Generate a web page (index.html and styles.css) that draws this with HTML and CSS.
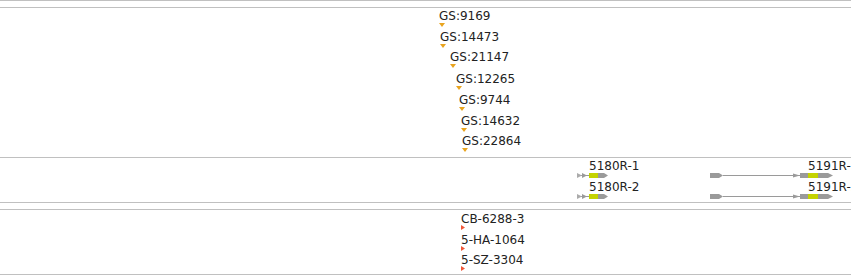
FILE: index.html
```html
<!DOCTYPE html>
<html lang="en">
<head>
  <meta charset="UTF-8">
  <title>Track view</title>
  <link rel="stylesheet" href="styles.css">
</head>
<body>

  <div class="browser">
    <div class="track-edge"></div>

    <div class="track-group">
      <!-- GS feature track -->
      <div class="track track-gs">
        <div class="feature" style="left:439px;top:1px">
          <div class="feature-label">GS:9169</div>
          <svg class="tick" width="6" height="4" viewBox="0 0 6 4"><polygon points="0,0 6,0 3,4"/></svg>
        </div>
        <div class="feature" style="left:440px;top:22px">
          <div class="feature-label">GS:14473</div>
          <svg class="tick" width="6" height="4" viewBox="0 0 6 4"><polygon points="0,0 6,0 3,4"/></svg>
        </div>
        <div class="feature" style="left:450px;top:42px">
          <div class="feature-label">GS:21147</div>
          <svg class="tick" width="6" height="4" viewBox="0 0 6 4"><polygon points="0,0 6,0 3,4"/></svg>
        </div>
        <div class="feature" style="left:456px;top:64px">
          <div class="feature-label">GS:12265</div>
          <svg class="tick" width="6" height="4" viewBox="0 0 6 4"><polygon points="0,0 6,0 3,4"/></svg>
        </div>
        <div class="feature" style="left:459px;top:85px">
          <div class="feature-label">GS:9744</div>
          <svg class="tick" width="6" height="4" viewBox="0 0 6 4"><polygon points="0,0 6,0 3,4"/></svg>
        </div>
        <div class="feature" style="left:461px;top:106px">
          <div class="feature-label">GS:14632</div>
          <svg class="tick" width="6" height="4" viewBox="0 0 6 4"><polygon points="0,0 6,0 3,4"/></svg>
        </div>
        <div class="feature" style="left:462px;top:126px">
          <div class="feature-label">GS:22864</div>
          <svg class="tick" width="6" height="4" viewBox="0 0 6 4"><polygon points="0,0 6,0 3,4"/></svg>
        </div>
      </div>

      <!-- gene models -->
      <div class="track track-genes">
        <div class="gene" style="left:577px;top:1px">
          <div class="feature-label" style="padding-left:12px">5180R-1</div>
          <svg class="gene-glyph" width="32" height="5" viewBox="0 0 32 5">
            <rect class="utr" x="0" y="2" width="12" height="1"/>
            <polygon class="utr light" points="0,0 5,2.5 0,5"/>
            <polygon class="utr" points="5,0 10,2.5 5,5"/>
            <rect class="cds" x="12" y="0" width="9" height="5"/>
            <polygon class="utr" points="21,0 27,0 31,2.5 27,5 21,5"/>
          </svg>
        </div>
        <div class="gene" style="left:577px;top:22px">
          <div class="feature-label" style="padding-left:12px">5180R-2</div>
          <svg class="gene-glyph" width="32" height="5" viewBox="0 0 32 5">
            <rect class="utr" x="0" y="2" width="12" height="1"/>
            <polygon class="utr light" points="0,0 5,2.5 0,5"/>
            <polygon class="utr" points="5,0 10,2.5 5,5"/>
            <rect class="cds" x="12" y="0" width="9" height="5"/>
            <polygon class="utr" points="21,0 27,0 31,2.5 27,5 21,5"/>
          </svg>
        </div>
        <div class="gene" style="left:710px;top:1px">
          <div class="feature-label" style="padding-left:98px">5191R-1</div>
          <svg class="gene-glyph" width="124" height="5" viewBox="0 0 124 5">
            <polygon class="utr" points="0,0 9,0 13,2.5 9,5 0,5"/>
            <rect class="utr" x="13" y="2" width="77" height="1"/>
            <polygon class="utr" points="83,0.5 90,2.5 83,4.5"/>
            <rect class="utr" x="90" y="0" width="8" height="5"/>
            <rect class="cds" x="98" y="0" width="10" height="5"/>
            <polygon class="utr" points="108,0 118,0 123,2.5 118,5 108,5"/>
          </svg>
        </div>
        <div class="gene" style="left:710px;top:22px">
          <div class="feature-label" style="padding-left:98px">5191R-2</div>
          <svg class="gene-glyph" width="124" height="5" viewBox="0 0 124 5">
            <polygon class="utr" points="0,0 9,0 13,2.5 9,5 0,5"/>
            <rect class="utr" x="13" y="2" width="77" height="1"/>
            <polygon class="utr" points="83,0.5 90,2.5 83,4.5"/>
            <rect class="utr" x="90" y="0" width="8" height="5"/>
            <rect class="cds" x="98" y="0" width="10" height="5"/>
            <polygon class="utr" points="108,0 118,0 123,2.5 118,5 108,5"/>
          </svg>
        </div>
      </div>
    </div>

    <div class="track-group">
      <!-- marker track -->
      <div class="track track-markers">
        <div class="feature marker" style="left:461px;top:2px">
          <div class="feature-label">CB-6288-3</div>
          <svg class="tick" width="4" height="5" viewBox="0 0 4 5"><polygon points="0,0 4,2.5 0,5"/></svg>
        </div>
        <div class="feature marker" style="left:461px;top:23px">
          <div class="feature-label">5-HA-1064</div>
          <svg class="tick" width="4" height="5" viewBox="0 0 4 5"><polygon points="0,0 4,2.5 0,5"/></svg>
        </div>
        <div class="feature marker" style="left:461px;top:43px">
          <div class="feature-label">5-SZ-3304</div>
          <svg class="tick" width="4" height="5" viewBox="0 0 4 5"><polygon points="0,0 4,2.5 0,5"/></svg>
        </div>
      </div>
    </div>
  </div>

</body>
</html>
```

FILE: styles.css
```css
body {
  margin: 0;
  background-color: #fff;
  font-family: "DejaVu Sans", sans-serif;
  font-size: 12px;
  color: #222;
}

.browser {
  width: 851px;
  height: 276px;
  overflow: hidden;
}

.track-edge {
  border-bottom: 1px solid #c0c0c0;
  margin-bottom: 6px;
}

.track-group {
  border-top: 1px solid #c0c0c0;
  border-bottom: 1px solid #c0c0c0;
}

.track-group + .track-group {
  margin-top: 6px;
}

.track {
  position: relative;
}

.track-gs {
  height: 149px;
}

.track-genes {
  height: 44px;
  border-top: 1px solid #c0c0c0;
}

.track-markers {
  height: 64px;
}

.feature,
.gene {
  position: absolute;
}

.feature-label {
  line-height: 14px;
  white-space: nowrap;
}

.tick {
  display: block;
  fill: #e9a41f;
}

.marker .tick {
  fill: #f0583a;
  margin-top: -1px;
}

.gene-glyph {
  display: block;
}

.utr {
  fill: #9a9a9a;
}

.utr.light {
  fill: #ababab;
}

.cds {
  fill: #c4d300;
}
```
